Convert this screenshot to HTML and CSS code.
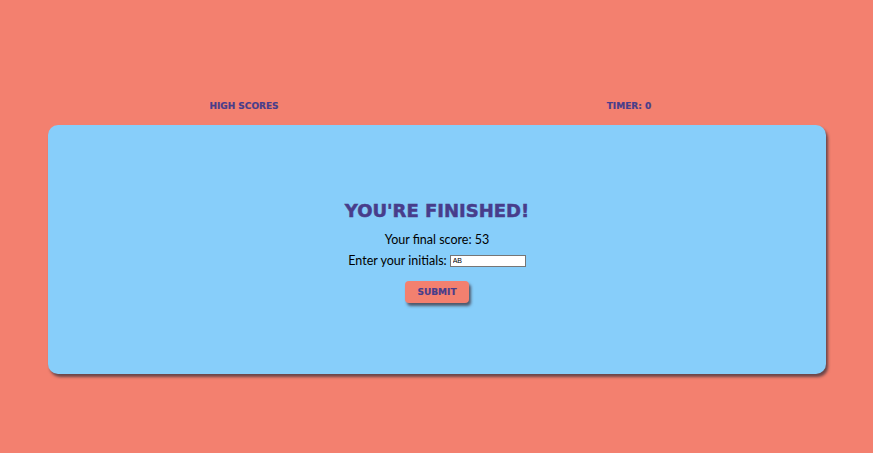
FILE: index.html
```html
<!DOCTYPE html>
<html>
<head>
<meta charset="utf-8">
<link rel="stylesheet" href="styles.css">
</head>
<body>
<header class="topbar">
  <a class="nav-link">High Scores</a>
  <span class="nav-link">Timer: 0</span>
</header>
<main class="card">
  <h1 class="title">You're finished!</h1>
  <p class="line">Your final score: 53</p>
  <form class="line form-row">
    <label for="initials">Enter your initials:</label>
    <input id="initials" class="initials" type="text" value="AB">
  </form>
  <button class="submit" type="button">Submit</button>
</main>
</body>
</html>
```
FILE: styles.css
```css
html, body {
  margin: 0;
  padding: 0;
}
body {
  background: #f3806f;
  height: 453px;
  font-family: "Lato", "Liberation Sans", sans-serif;
  color: #000;
  padding-top: 99px;
  box-sizing: border-box;
}
.topbar {
  width: 770px;
  margin: 0 auto;
  display: grid;
  grid-template-columns: 1fr 1fr;
  text-align: center;
  height: 14px;
  align-items: center;
}
.nav-link {
  font-family: "DejaVu Sans", sans-serif;
  font-weight: bold;
  font-size: 9px;
  text-transform: uppercase;
  color: #483d8b;
  -webkit-text-stroke: 0.2px #483d8b;
}
.card {
  margin: 12px 47px 0 48px;
  height: 249px;
  background: #87cefa;
  border-radius: 10px;
  box-shadow: 2px 3px 3px rgba(60, 50, 60, 0.75);
  display: flex;
  flex-direction: column;
  align-items: center;
  justify-content: center;
  padding-top: 4px;
  box-sizing: border-box;
}
.title {
  font-family: "DejaVu Sans", sans-serif;
  font-weight: 900;
  font-size: 18px;
  color: #483d8b;
  -webkit-text-stroke: 0.5px #483d8b;
  text-transform: uppercase;
  margin: 0 0 8px;
  letter-spacing: 0;
}
.line {
  margin: 0;
  font-size: 12.5px;
  line-height: 21px;
}
.form-row {
  display: flex;
  align-items: center;
  gap: 3px;
}
.initials {
  width: 70px;
  height: 8px;
  padding: 1px 2px;
  font-size: 7px;
  font-family: "Liberation Sans", sans-serif;
  border: 1px solid #767676;
  background: #fff;
}
.submit {
  margin-top: 10px;
  width: 64px;
  height: 22px;
  background: #f3806f;
  border: none;
  border-radius: 4px;
  box-shadow: 2px 3px 3px rgba(60, 50, 60, 0.75);
  font-family: "DejaVu Sans", sans-serif;
  font-weight: bold;
  font-size: 9px;
  text-transform: uppercase;
  color: #483d8b;
  -webkit-text-stroke: 0.2px #483d8b;
  padding: 0;
}
```
